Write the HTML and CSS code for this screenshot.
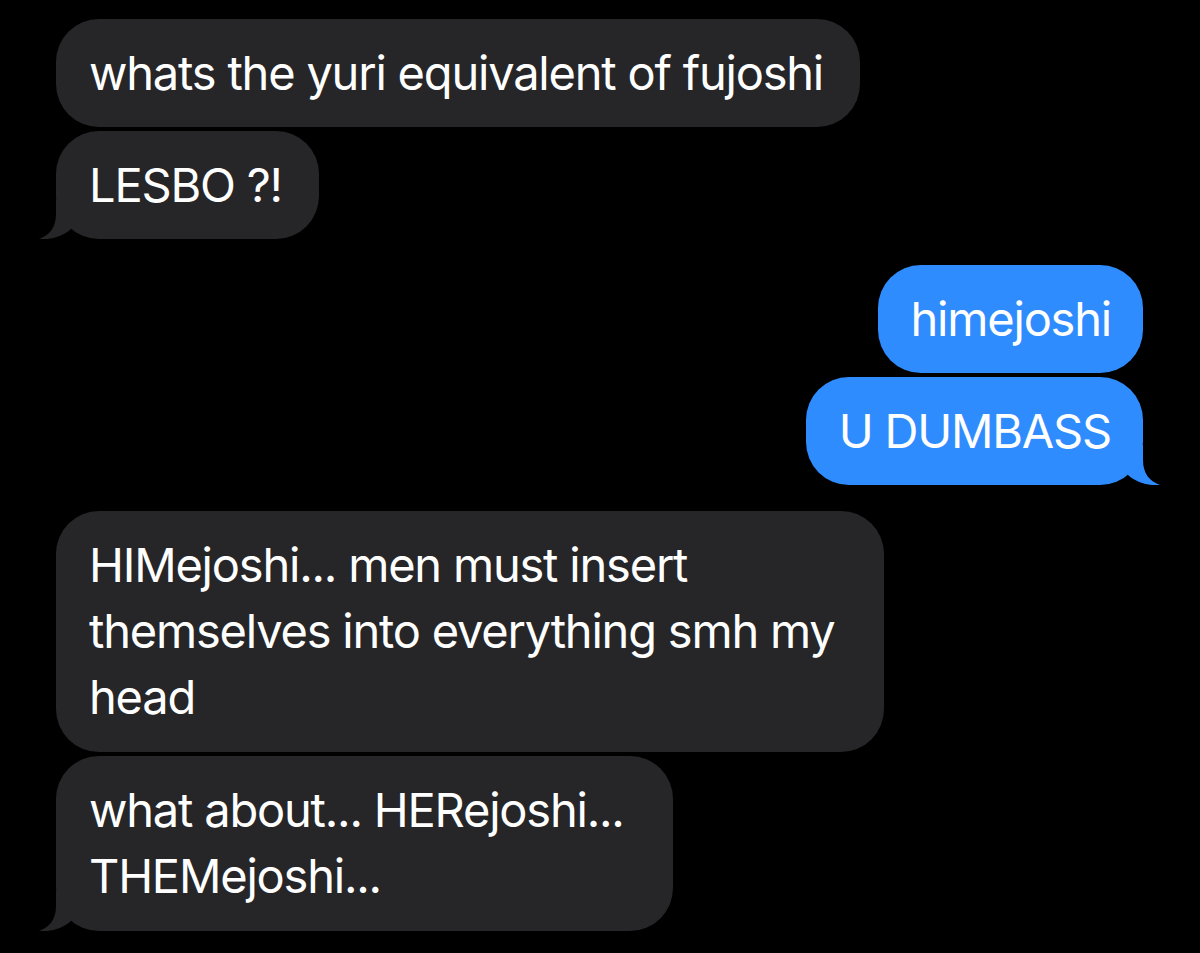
FILE: index.html
```html
<!DOCTYPE html>
<html lang="en">
<head>
<meta charset="utf-8">
<title>Messages</title>
<link rel="stylesheet" href="styles.css">
</head>
<body>
<main class="thread">
  <section class="group group--in">
    <div class="bubble bubble--in">whats the yuri equivalent of fujoshi</div>
    <div class="bubble bubble--in">LESBO ?!<svg class="tail" viewBox="-18 -40 40 40" aria-hidden="true"><path d="M0 -40 L0 -25 C0 -12 -6 -4 -17 0 C-6 1 6 -2 15 -10 L20 -40 Z"/></svg></div>
  </section>
  <section class="group group--out">
    <div class="bubble bubble--out">himejoshi</div>
    <div class="bubble bubble--out">U DUMBASS<svg class="tail" viewBox="-18 -40 40 40" aria-hidden="true"><path d="M0 -40 L0 -25 C0 -12 -6 -4 -17 0 C-6 1 6 -2 15 -10 L20 -40 Z"/></svg></div>
  </section>
  <section class="group group--in group--last">
    <div class="bubble bubble--in">HIMejoshi... men must insert<br>themselves into everything smh my&nbsp;<br>head</div>
    <div class="bubble bubble--in">what about... HERejoshi...&nbsp;<br>THEMejoshi...<svg class="tail" viewBox="-18 -40 40 40" aria-hidden="true"><path d="M0 -40 L0 -25 C0 -12 -6 -4 -17 0 C-6 1 6 -2 15 -10 L20 -40 Z"/></svg></div>
  </section>
</main>
</body>
</html>
```
FILE: styles.css
```css
html, body {
  margin: 0;
  background: #000;
}

body {
  font-family: Inter, "Liberation Sans", sans-serif;
  color: #fff;
}

.thread {
  display: flex;
  flex-direction: column;
  gap: 26px;
  padding: 19px 57px 0 56px;
}

.group {
  display: flex;
  flex-direction: column;
  gap: 4px;
}

.group--in {
  align-items: flex-start;
}

.group--out {
  align-items: flex-end;
}

.bubble {
  position: relative;
  padding: 21px 37px 21px 33px;
  border-radius: 43px;
  font-size: 47px;
  line-height: 66px;
  letter-spacing: -1.2px;
  white-space: nowrap;
}

.group--last .bubble {
  padding-bottom: 22px;
}

.bubble--in {
  background: #262629;
}

.bubble--out {
  background: #2f8cff;
  padding: 21px 32px 21px 33px;
}

.tail {
  position: absolute;
  bottom: 0;
  width: 40px;
  height: 40px;
  display: block;
}

.bubble--in .tail {
  left: -18px;
  fill: #262629;
}

.bubble--out .tail {
  right: -18px;
  fill: #2f8cff;
  transform: scaleX(-1);
}
```
